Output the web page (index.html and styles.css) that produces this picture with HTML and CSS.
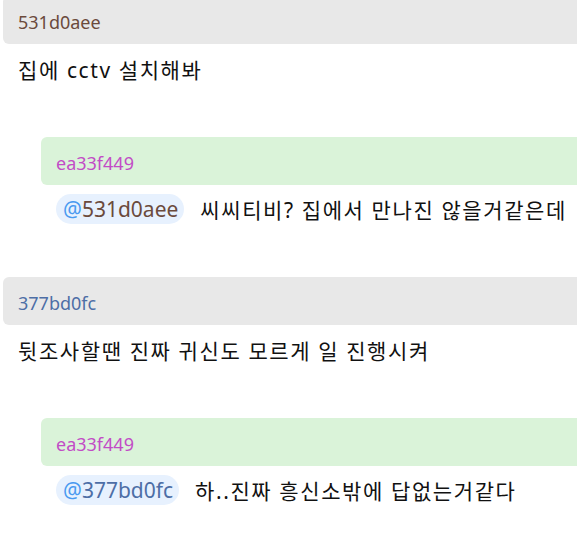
FILE: index.html
```html
<!DOCTYPE html>
<html lang="ko">
<head>
  <meta charset="UTF-8">
  <meta name="viewport" content="width=device-width, initial-scale=1.0">
  <title>댓글</title>
  <link rel="stylesheet" href="styles.css">
</head>
<body>

  <div class="thread">

    <div class="comment">
      <div class="comment-head"><span class="uid uid-brown">531d0aee</span></div>
      <div class="comment-body">집에 cctv 설치해봐</div>

      <div class="comment reply">
        <div class="comment-head reply-head"><span class="uid uid-pink">ea33f449</span></div>
        <div class="comment-body">
          <span class="mention"><span class="at">@</span><span class="uid-brown">531d0aee</span></span>
          씨씨티비? 집에서 만나진 않을거같은데
        </div>
      </div>
    </div>

    <div class="comment">
      <div class="comment-head"><span class="uid uid-blue">377bd0fc</span></div>
      <div class="comment-body">뒷조사할땐 진짜 귀신도 모르게 일 진행시켜</div>

      <div class="comment reply">
        <div class="comment-head reply-head"><span class="uid uid-pink">ea33f449</span></div>
        <div class="comment-body">
          <span class="mention"><span class="at">@</span><span class="uid-blue">377bd0fc</span></span>
          하..진짜 흥신소밖에 답없는거같다
        </div>
      </div>
    </div>

  </div>

</body>
</html>
```

FILE: styles.css
```css
/* Reset */
* {
  margin: 0;
  padding: 0;
  box-sizing: border-box;
}

body {
  font-family: "Noto Sans", "Noto Sans CJK KR", sans-serif;
  background-color: #fff;
  color: #111;
  overflow: hidden;
}

/* Lista de comentarios */
.thread {
  width: 574px;
  margin-top: -4px;
  margin-left: 3px;
}

.comment + .comment {
  margin-top: 53px;
}

/* Cabecalho com o id */
.comment-head {
  height: 48px;
  display: flex;
  align-items: center;
  padding: 3px 0 0 15px;
  background-color: #e8e8e8;
  border-radius: 6px 0 0 6px;
}

.reply-head {
  background-color: #daf3d9;
}

.uid {
  font-size: 18px;
}

.uid-brown {
  color: #6b4a3c;
}

.uid-blue {
  color: #4d6ea6;
}

.uid-pink {
  color: #c24cc6;
}

/* Texto */
.comment-body {
  display: flex;
  align-items: center;
  gap: 16px;
  height: 30px;
  margin-top: 10px;
  padding-left: 15px;
  font-size: 21px;
  letter-spacing: 1.6px;
  white-space: nowrap;
}

.reply {
  margin-top: 53px;
  margin-left: 38px;
}

.reply .comment-body {
  margin-top: 9px;
}

/* Mencao */
.mention {
  display: inline-flex;
  align-items: center;
  height: 30px;
  padding: 0 6px 0 7px;
  border-radius: 15px;
  background-color: #e7f1fe;
  font-size: 21px;
  letter-spacing: 0;
}

.at {
  color: #4a9af0;
}
```
